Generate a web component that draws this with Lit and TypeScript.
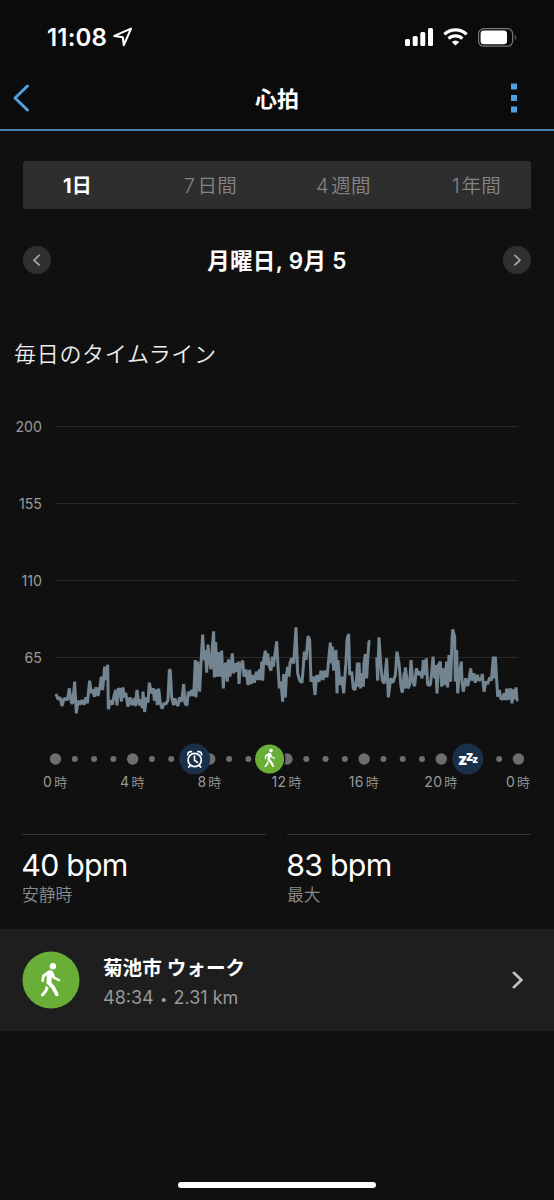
import { LitElement, html, svg, css } from "lit";
import { customElement } from "lit/decorators.js";

// Heart-rate trace, in thirds of a pixel, grouped by stretches of the day.
const MORNING = "48,252 54,268 60,262 66,288 72,265 82,270 88,235 94,278 98,280 104,215 109,310 114,272 120,284 126,270 132,284 138,262 142,280 149,212 154,250 158,238 163,260 168,232 174,258 180,228 184,200 188,240 194,170 198,210 203,164 205,298 212,270 217,284 222,258 227,240 231,286 235,234 238,262 241,234 244,275 249,232 253,262 257,248 264,290 270,262 276,285 283,265 286,288 291,240 297,286 302,268 307,294 309,245 314,306 319,262 324,278 328,218 334,250 340,235 343,272 348,238 352,285 356,236 361,280 366,296 372,280";
const MIDDAY = "3,282 9,270 13,180 16,180 20,262 26,285 30,265 34,280 39,288 44,262 50,275 56,222 60,280 66,286 70,245 75,258 80,240 86,258 91,150 93,262 98,155 104,245 108,160 113,74 117,150 121,120 125,188 129,104 133,150 138,178 142,110 146,64 148,202 152,96 156,200 161,126 165,200 170,122 175,235 178,180 182,158 187,215 190,148 195,200 202,130 206,190 211,160 216,185 220,155 222,222 226,170 233,152 237,200 243,178 249,225 254,180 258,222 263,195 268,218 274,185 279,210 284,178 288,210 290,155 293,212 296,150 301,122 305,165 308,130 312,165 318,182 322,140 325,170 331,125 335,94 339,170 343,235 348,215 353,275 356,192";
const AFTERNOON = "1,262 4,200 8,170 12,200 15,160 20,145 26,160 33,52 38,190 44,212 51,218 55,170 58,125 63,150 69,78 74,90 78,215 85,200 90,255 95,195 102,215 108,182 114,210 119,182 126,202 131,150 136,98 140,160 142,110 146,182 150,145 153,120 156,250 159,150 162,190 166,225 171,200 176,250 183,155 186,90 191,72 194,195 200,185 205,235 210,240 215,205 217,158 219,230 222,158 226,235 231,190 235,230 237,160 241,132 245,205 248,150 252,94 256,94";
const EVENING_A = "275,142 278,212 282,82 287,160 292,212 298,220 305,145 310,262 317,205 324,218 331,195 336,125 342,160 348,230 352,248 358,188";
const EVENING_B = "-1,235 1,172 9,235 14,225 18,150 23,215 29,228 34,175 41,195 47,185 51,205 55,150 60,195 64,145 68,225 76,225 80,190 84,140 89,205 92,165 96,250 100,165 106,155 110,230 115,175 119,225 125,155 128,232 132,135 137,215 141,90 143,58 149,80 151,215 155,120 158,250 163,190 169,155 171,215 175,245 182,205 188,228 193,205 197,175 201,212 206,190 211,218 217,195 222,212 229,205 232,192 237,245 243,215 248,222 254,202 259,212 265,140 268,205 271,140 275,210 278,260 283,240 287,265 293,268 297,250 302,270 305,236 307,270 311,236 315,268 317,235 321,280 326,238 330,268 333,232 336,270 340,272";

const shift = (run: string, dx: number) =>
  run.split(" ").map((p) => {
    const [x, y] = p.split(",").map(Number);
    return `${x + dx},${y}`;
  }).join(" ");

const TRACES = [
  `${MORNING} ${shift(MIDDAY, 375)} ${shift(AFTERNOON, 735)}`,
  `${shift(EVENING_A, 735)} ${shift(EVENING_B, 1095)}`,
];

const walker = svg`
  <circle cx="36.6" cy="15.3" r="3.2" fill="#fff"></circle>
  <path d="M32 19.5 Q34.5 18.6 36.6 20.2 L38.8 25.8 L43.5 28.3 Q44.6 29.6 43.2 30.4 L37.2 28 L35.8 25.8 L35 31.2 L38.6 35.6 L42.4 43.2 Q42.2 45.8 39.4 45 L35.2 37.6 L30 32.2 L30.6 24 L28.2 26.2 L27.6 30.6 Q26 31.6 25 30.2 L25.8 24.2 Z" fill="#fff"></path>
  <path d="M29.8 34.4 L32.4 37.2 L30.6 41 L26.8 45.4 Q24.4 45.8 24.6 43.6 L28 39.4 Z" fill="#fff"></path>`;

@customElement("app-root")
export class AppRoot extends LitElement {
  static styles = css`
    :host {
      display: flex;
      flex-direction: column;
      box-sizing: border-box;
      width: 554px;
      height: 1200px;
      overflow: hidden;
      background: #101010;
      color: #fff;
      font-family: Inter, "Noto Sans CJK JP", sans-serif;
    }
    svg { display: block; flex: none; }
    .top { height: 129px; background: #0b0b0b; border-bottom: 2px solid #477fae; flex: none; }
    .status { display: flex; align-items: center; height: 67px; padding: 7px 37px 0 47px; box-sizing: border-box; }
    .clock { font-size: 24px; font-weight: 600; letter-spacing: 0.2px; margin-right: 6px; }
    .signals { display: flex; align-items: center; gap: 10px; margin-left: auto; }
    .nav { display: flex; align-items: center; justify-content: space-between; height: 62px; padding: 0 37px 0 13px; }
    .title { font-size: 22px; font-weight: 600; line-height: 30px; margin-left: 13px; padding-top: 1px; }
    .tabs {
      display: grid; grid-template-columns: repeat(4, 133px); justify-content: center;
      align-items: center; height: 48px; margin: 30px 23px 0; border-radius: 3px;
      background: #2e2e2e; color: #858585; font-size: 19.5px; font-weight: 350;
      text-align: center; flex: none;
    }
    .tab { line-height: 28px; letter-spacing: 0.2px; padding-top: 1px; }
    .tab.active { color: #fff; font-weight: 700; font-size: 20px; }
    .thin { margin-right: 2.5px; }
    .year { margin-right: 1.5px; }
    .date { display: flex; align-items: center; justify-content: space-between; height: 30px; margin: 36px 23px 0; flex: none; }
    .day { font-size: 22.5px; font-weight: 600; line-height: 30px; letter-spacing: 0.35px; padding-top: 2px; }
    .heading { margin: 63px 0 0 14px; height: 33px; line-height: 32px; font-size: 22px; font-weight: 350; color: #eee; flex: none; letter-spacing: 0.7px; }
    .chart { position: relative; margin-top: 17.6px; flex: none; }
    .level { display: grid; grid-template-columns: 42px 463px; column-gap: 13px; align-items: center; height: 76.8px; }
    .num { text-align: right; font-size: 14.2px; color: #9b9b9b; }
    .rule { height: 1px; background: #292929; }
    .trace { position: absolute; left: 40px; top: 221px; }
    .hours { margin-top: 46.4px; flex: none; }
    .ticks { display: grid; grid-template-columns: repeat(7, 77.17px); margin: -4px 0 0 16.5px; flex: none; }
    .tick { text-align: center; font-size: 14px; line-height: 20px; color: #999; letter-spacing: 0.3px; }
    .kanji { font-size: 13px; font-weight: 350; margin-left: 2px; letter-spacing: 0; }
    .stats { display: grid; grid-template-columns: 244px 244px; column-gap: 21px; margin: 42px 22px 0; flex: none; }
    .stat { border-top: 1px solid #353535; height: 95px; padding-top: 11.5px; box-sizing: border-box; }
    .value { font-size: 30.3px; line-height: 37px; letter-spacing: -0.75px; margin-left: -0.7px; }
    .label { font-size: 16.8px; line-height: 22px; color: #8b8b8b; font-weight: 350; }
    .activity { display: flex; align-items: center; height: 102px; padding: 0 30px 0 22px; background: #1e1e1e; flex: none; }
    .info { margin-left: 23px; flex: 1; padding-top: 5px; }
    .name { font-size: 19.6px; font-weight: 600; line-height: 28px; }
    .detail { font-size: 18px; line-height: 26px; color: #999; margin-top: 3px; }
    .bullet { font-size: 13px; margin: 0 1.2px; }
    .home { width: 198px; height: 6px; border-radius: 3px; background: #fff; margin: auto auto 12px; }
  `;

  private hourDots() {
    return Array.from({ length: 25 }, (_, i) => svg`
      <circle cx=${55.5 + i * 19.29} cy="17" r=${i % 4 === 0 ? 5.7 : 3} fill="#6e6e6e"></circle>`);
  }

  render() {
    return html`
      <header class="top">
        <div class="status">
          <span class="clock">11:08</span>
          <svg width="20" height="20" viewBox="0 0 20 20">
            <path d="M1.3 8.9 L18 1.6 L10.8 18.2 L9.8 10.2 Z" fill="none" stroke="#fff" stroke-width="2.1" stroke-linejoin="round"></path>
          </svg>
          <div class="signals">
            <svg width="28" height="18" viewBox="0 0 28 18" fill="#fff">
              <rect x="0" y="11" width="5" height="7" rx="1.5"></rect>
              <rect x="7.7" y="8" width="5" height="10" rx="1.5"></rect>
              <rect x="15.3" y="4" width="5" height="14" rx="1.5"></rect>
              <rect x="23" y="0" width="5" height="18" rx="1.5"></rect>
            </svg>
            <svg width="25" height="18" viewBox="0 0 25 18" fill="none" stroke="#fff" stroke-width="3.2">
              <path d="M1.4 6.4 A15.8 15.8 0 0 1 23.6 6.4"></path>
              <path d="M5.6 10.7 A9.8 9.8 0 0 1 19.4 10.7"></path>
              <path d="M8.8 13.9 Q12.5 10.9 16.2 13.9 L12.5 17.6 Z" fill="#fff" stroke="none"></path>
            </svg>
            <svg width="39" height="19" viewBox="0 0 39 19">
              <rect x=".6" y=".6" width="34" height="17.6" rx="5" fill="none" stroke="#777" stroke-width="1.2"></rect>
              <rect x="2.6" y="2.6" width="26.4" height="13.6" rx="3.2" fill="#fff"></rect>
              <path d="M36.8 6.3 Q39 9.4 36.8 12.5 Z" fill="#777"></path>
            </svg>
          </div>
        </div>
        <nav class="nav">
          <svg width="17" height="28" viewBox="0 0 17 28"><path d="M14.4 2 L2 14 L14.4 26" fill="none" stroke="#50a0e0" stroke-width="3" stroke-linecap="round" stroke-linejoin="round"></path></svg>
          <span class="title">心拍</span>
          <svg width="6" height="30" viewBox="0 0 6 30" fill="#50a0e0"><path d="M0 .5h6v6H0z M0 12h6v6H0z M0 23.5h6v6H0z"></path></svg>
        </nav>
      </header>
      <div class="tabs">
        <span class="tab active">1日</span>
        <span class="tab"><span class="thin">7</span>日間</span>
        <span class="tab"><span class="thin">4</span>週間</span>
        <span class="tab"><span class="year">1</span>年間</span>
      </div>
      <div class="date">
        <svg width="28" height="28" viewBox="0 0 28 28"><circle cx="14" cy="14" r="14" fill="#303030"></circle><path d="M16.6 8.9 L11 14.2 L16.6 19.4" fill="none" stroke="#aaa" stroke-width="1.6"></path></svg>
        <span class="day">月曜日, 9月 5</span>
        <svg width="28" height="28" viewBox="0 0 28 28"><circle cx="14" cy="14" r="14" fill="#303030"></circle><path d="M11.4 8.9 L17 14.2 L11.4 19.4" fill="none" stroke="#aaa" stroke-width="1.6"></path></svg>
      </div>
      <div class="heading">毎日のタイムライン</div>
      <section class="chart">
        ${[200, 155, 110, 65].map((n) => html`<div class="level"><span class="num">${n}</span><span class="rule"></span></div>`)}
        <svg class="trace" width="490" height="120" viewBox="0 0 1470 360">
          ${TRACES.map((t) => svg`<polyline points=${t} fill="none" stroke="#748592" stroke-width="9" stroke-linejoin="bevel"></polyline>`)}
        </svg>
      </section>
      <svg class="hours" width="554" height="34" viewBox="0 0 554 34">
        ${this.hourDots()}
        <circle cx="194.7" cy="17" r="15.4" fill="#1a2f4a"></circle>
        <g fill="none" stroke="#fff" stroke-width="1.7" stroke-linecap="round">
          <circle cx="194.7" cy="18" r="6.6"></circle>
          <path d="M194.5 14 V18.4 L197.3 20.3 M187.8 13 Q187.6 9.4 191.4 9.6 M201.6 13 Q201.8 9.4 198 9.6 M190.2 23.4 L188.8 25 M199.2 23.4 L200.6 25"></path>
        </g>
        <circle cx="269.6" cy="17" r="15.8" fill="#101010"></circle>
        <circle cx="269.6" cy="17" r="14.5" fill="#68ae37"></circle>
        <g transform="translate(250.9 .2) scale(.55)">${walker}</g>
        <circle cx="467.8" cy="17" r="15.4" fill="#1a2f4a"></circle>
        <g fill="#fff" font-family="Open Sans, sans-serif" font-weight="800">
          <text x="458.6" y="23" font-size="16.5">z</text>
          <text x="466.2" y="19" font-size="13.5">z</text>
          <text x="472.4" y="20.8" font-size="10.5">z</text>
        </g>
      </svg>
      <div class="ticks">
        ${[0, 4, 8, 12, 16, 20, 0].map((h) => html`<span class="tick">${h}<span class="kanji">時</span></span>`)}
      </div>
      <section class="stats">
        <div class="stat"><div class="value">40 bpm</div><div class="label">安静時</div></div>
        <div class="stat"><div class="value">83 bpm</div><div class="label">最大</div></div>
      </section>
      <section class="activity">
        <svg width="58" height="58" viewBox="0 0 58 58">
          <circle cx="29" cy="29" r="28.5" fill="#68ae37"></circle>
          <g transform="translate(-5.7 0)">${walker}</g>
        </svg>
        <div class="info">
          <div class="name">菊池市 ウォーク</div>
          <div class="detail">48:34 <span class="bullet">•</span> 2.31 km</div>
        </div>
        <svg width="12" height="18" viewBox="0 0 12 18"><path d="M1.8 1.8 L9.4 9 L1.8 16.2" fill="none" stroke="#c4c4c4" stroke-width="2.6" stroke-linecap="round"></path></svg>
      </section>
      <div class="home"></div>
    `;
  }
}
